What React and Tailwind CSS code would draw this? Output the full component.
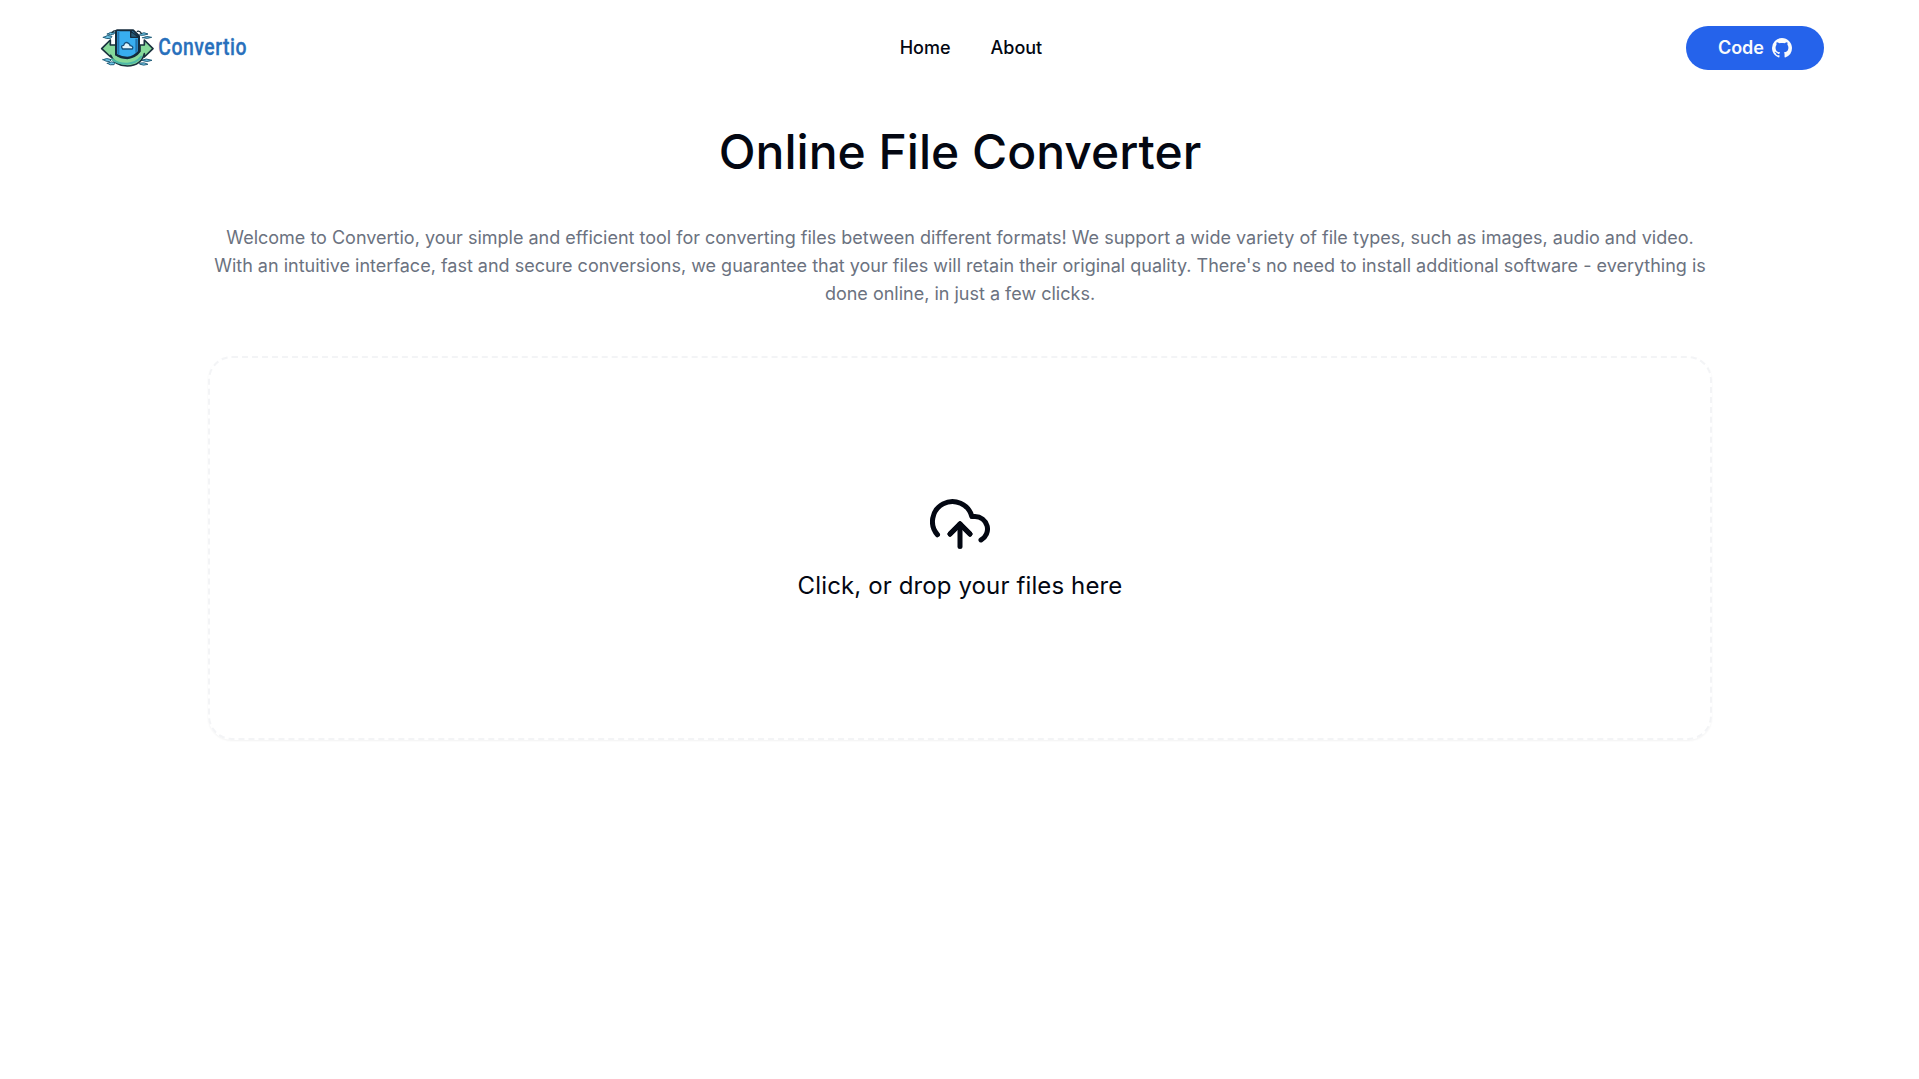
import React from "react";
import { FiUploadCloud } from "react-icons/fi";
import { VscGithubInverted } from "react-icons/vsc";

function Logo() {
  return (
    <svg width="166" height="56" viewBox="0 0 498 168" className="block overflow-visible" role="img" aria-label="Convertio">
      <g strokeLinejoin="round" strokeLinecap="round">
        <g fill="#6cc3e6" stroke="#28617c" strokeWidth="3">
          <path d="M52 42Q62 34 74 37L72 42Q62 46 52 42Z" />
          <path d="M40 52Q54 42 66 49L62 55Q50 58 40 52Z" />
          <path d="M150 42Q162 34 174 42Q162 47 152 46Z" />
          <path d="M158 53Q170 46 185 52Q172 58 158 53Z" />
          <path d="M39 119Q50 112 64 119L58 125Q48 125 39 119Z" />
          <path d="M52 130Q64 122 76 128L72 134Q60 137 52 130Z" />
          <path d="M154 121Q168 113 186 121Q172 128 154 121Z" />
          <path d="M150 129Q164 126 174 133Q160 138 150 133Z" />
        </g>
        <path d="M66 38Q72 29 84 33M142 34Q150 32 154 40" fill="none" stroke="#19313d" strokeWidth="4" />
        <path d="M35 86L61 60V75H78V104Q92 115 112 115Q136 113 150 94V75H163V60L189 86L163 111V101Q154 137 112 138Q74 137 62 106V111Z" fill="#86d99a" stroke="#19313d" strokeWidth="5" />
        <path d="M66 118Q86 132 112 131Q138 130 154 110" fill="none" stroke="#4db7a7" strokeWidth="6" />
        <path d="M82 31H130L147 48V94Q132 111 112 113Q94 113 78 104V36Q78 31 82 31Z" fill="#38aef0" stroke="#142b3c" strokeWidth="6" />
        <path d="M82 36V101L88 104V36Z" fill="#2374ae" />
        <path d="M122 33V52H146Z" fill="#285b77" stroke="#142b3c" strokeWidth="4" />
        <path d="M143 56V92L136 99V56Z" fill="#2374ae" />
        <path d="M98 87Q90 77 101 76Q105 62 117 71Q121 74 120 77Q132 79 127 87Z" fill="#e2f4fb" stroke="#18517c" strokeWidth="4" />
      </g>
      <text x="205" y="106" textLength="266" lengthAdjust="spacingAndGlyphs" fill="#2870bc" stroke="#2870bc" strokeWidth="1" fontFamily="Roboto, sans-serif" fontWeight="500" fontSize="74" letterSpacing="2">
        Convertio
      </text>
    </svg>
  );
}

export default function App() {
  return (
    <div className="min-h-[1079px] bg-white font-['Inter',sans-serif] text-[#030712]">
      <nav className="flex h-24 items-center justify-between pr-[95px] pl-[90px]">
        <a href="#"><Logo /></a>
        <div className="flex gap-10 text-lg font-medium">
          <a href="#">Home</a>
          <a href="#">About</a>
        </div>
        <button className="flex h-11 items-center gap-2 rounded-full bg-[#2563eb] px-8 text-lg font-semibold text-gray-50">
          Code <VscGithubInverted size={20} />
        </button>
      </nav>
      <main className="mx-auto flex w-[1504px] flex-col text-center">
        <h1 className="mt-8 pl-px text-5xl font-medium">Online File Converter</h1>
        <p className="mt-12 pl-px text-lg leading-7 text-[#6b7280]">
          Welcome to Convertio, your simple and efficient tool for converting files between different formats! We support a wide variety of file types, such as images, audio and video. With an intuitive interface, fast and secure conversions, we guarantee that your files will retain their original quality. There's no need to install additional software - everything is done online, in just a few clicks.
        </p>
        <div className="mt-12 flex h-96 flex-col items-center justify-center gap-4 rounded-3xl border-2 border-dashed border-[#f3f4f6] shadow-xs">
          <FiUploadCloud size={60} />
          <p className="pl-px text-2xl tracking-[0.12px]">Click, or drop your files here</p>
        </div>
      </main>
    </div>
  );
}
